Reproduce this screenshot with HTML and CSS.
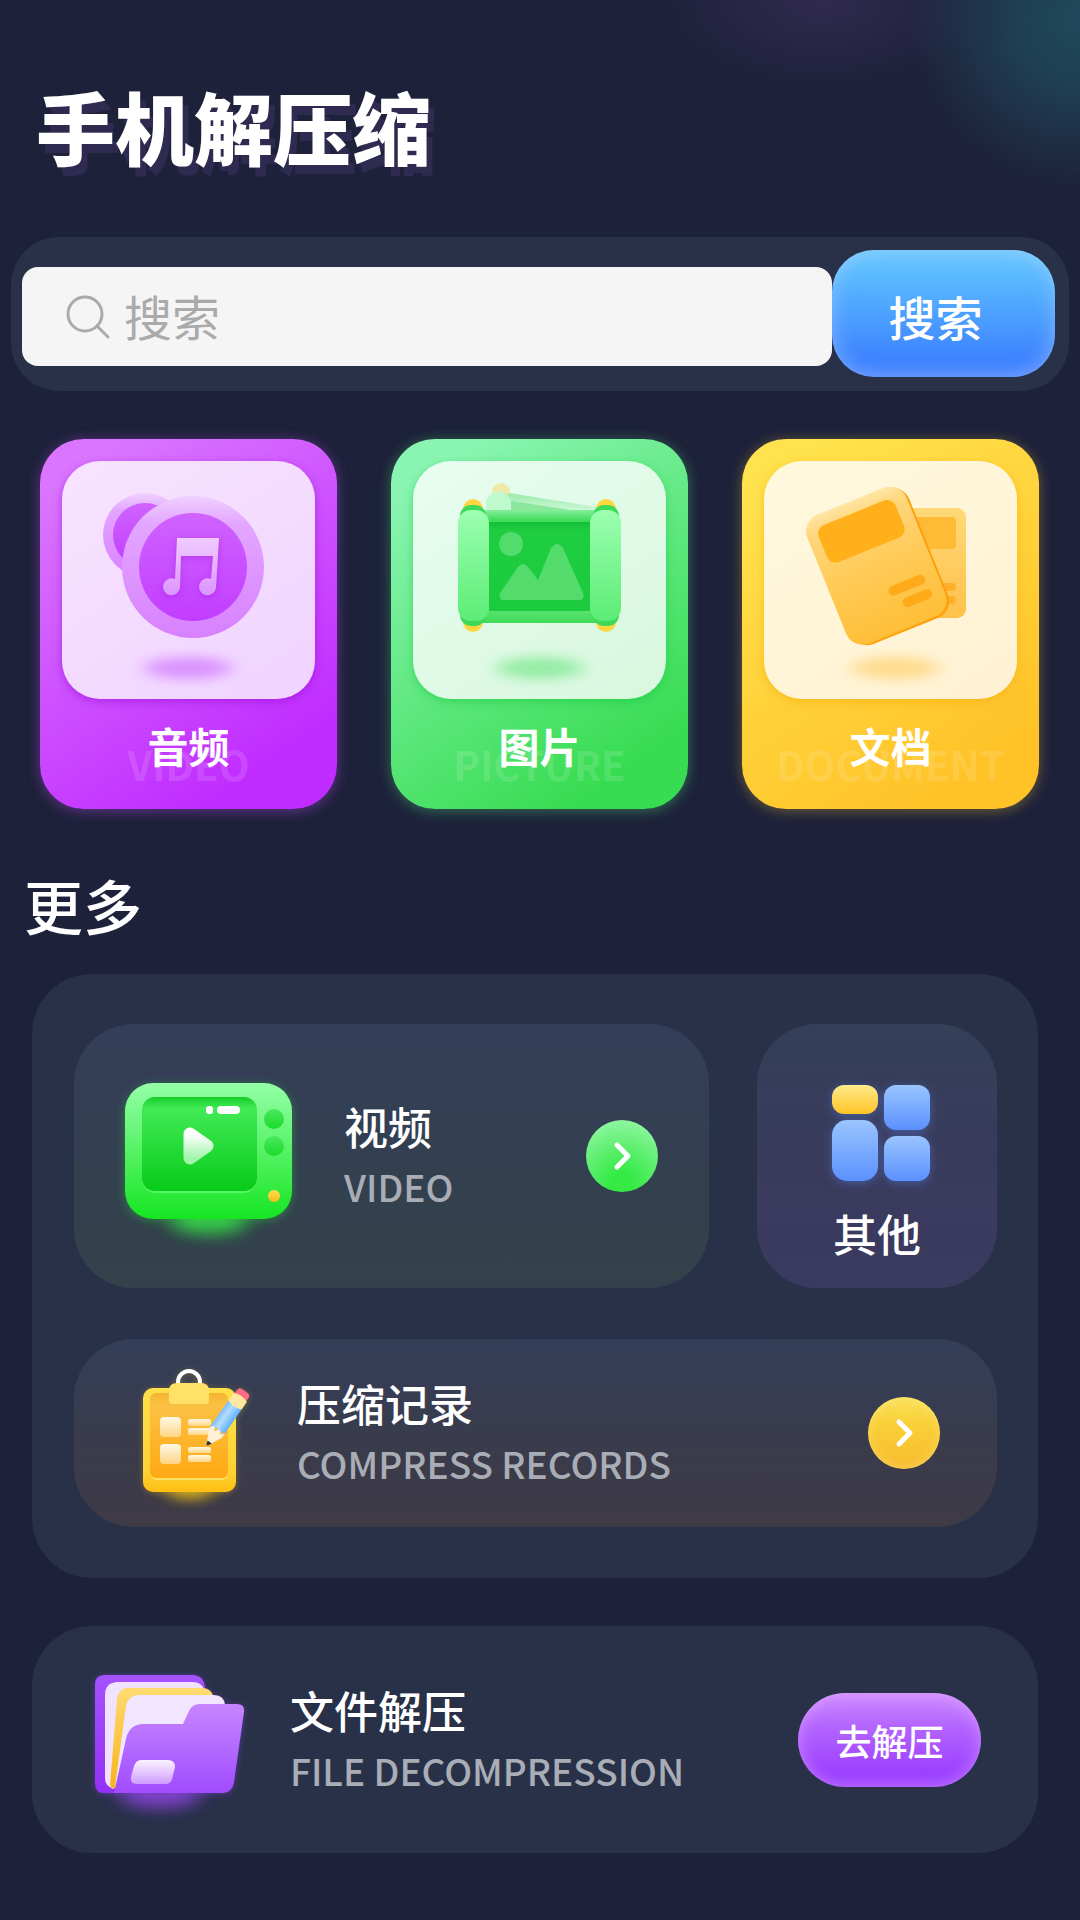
FILE: index.html
```html
<!DOCTYPE html>
<html lang="zh-CN">
<head>
  <meta charset="UTF-8" />
  <meta name="viewport" content="width=device-width, initial-scale=1.0"/>
  <title>手机解压缩</title>
  <link rel="stylesheet" href="styles.css">
</head>
<body>
  <header class="header">
    <h1>手机解压缩</h1>
  </header>

  <main>
    <form class="search" role="search">
      <label class="search-box">
        <svg class="search-icon" viewBox="0 0 44 44" fill="none" stroke="#aaa" stroke-width="3" stroke-linecap="round" aria-hidden="true">
          <circle cx="19" cy="19" r="17"/>
          <path d="M31 31L42 42"/>
        </svg>
        <input type="search" class="search-input" placeholder="搜索" aria-label="搜索">
      </label>
      <button type="submit" class="search-button">搜索</button>
    </form>

    <nav class="types">
      <a href="#audio" class="type type-audio">
        <span class="type-picture">
          <svg viewBox="0 0 253 238" aria-hidden="true">
            <defs>
              <linearGradient id="disc-ring" x1="0" y1="0" x2="0" y2="1">
                <stop offset="0" stop-color="#f0d0ff"/>
                <stop offset=".2" stop-color="#e3a6ff"/>
                <stop offset="1" stop-color="#d880ff"/>
              </linearGradient>
              <linearGradient id="disc-core" x1="0" y1="0" x2="0" y2="1">
                <stop offset="0" stop-color="#d063ff"/>
                <stop offset="1" stop-color="#c23dff"/>
              </linearGradient>
              <linearGradient id="note" x1="0" y1="0" x2="0" y2="1">
                <stop offset="0" stop-color="#f0ccff"/>
                <stop offset="1" stop-color="#dc94ff"/>
              </linearGradient>
              <filter id="soft" x="-50%" y="-200%" width="200%" height="500%">
                <feGaussianBlur stdDeviation="9 6"/>
              </filter>
            </defs>
            <ellipse cx="126" cy="207" rx="44" ry="11" fill="#d88cff" opacity=".9" filter="url(#soft)"/>
            <circle cx="83" cy="74" r="42" fill="url(#disc-ring)"/>
            <circle cx="83" cy="74" r="32" fill="url(#disc-core)"/>
            <circle cx="131" cy="106" r="71" fill="url(#disc-ring)"/>
            <circle cx="131" cy="106" r="54" fill="url(#disc-core)"/>
            <path class="note" fill="url(#note)" d="M115 77H157L154 127A8.500 8.500 0 1 1 149 118L151 95H119L118 127A8.500 8.500 0 1 1 113 118Z"/>
          </svg>
        </span>
        <span class="type-name">音频</span>
        <span class="type-ghost">VIDEO</span>
      </a>

      <a href="#picture" class="type type-image">
        <span class="type-picture">
          <svg viewBox="0 0 253 238" aria-hidden="true">
            <defs>
              <linearGradient id="roller" x1="0" y1="0" x2="0" y2="1">
                <stop offset="0" stop-color="#9cffb0"/>
                <stop offset="1" stop-color="#5cec76"/>
              </linearGradient>
              <linearGradient id="sheet" x1="0" y1="0" x2="0" y2="1">
                <stop offset="0" stop-color="#86ee9a"/>
                <stop offset=".09" stop-color="#42dc5c"/>
                <stop offset=".88" stop-color="#5ce273"/>
                <stop offset="1" stop-color="#3edb58"/>
              </linearGradient>
              <linearGradient id="canvas" x1="0" y1="0" x2="0" y2="1">
                <stop offset="0" stop-color="#14c135"/>
                <stop offset=".1" stop-color="#1fcd40"/>
                <stop offset="1" stop-color="#1ccb3d"/>
              </linearGradient>
              <linearGradient id="back-sheet" x1="0" y1="0" x2="0" y2="1">
                <stop offset="0" stop-color="#97eca9"/>
                <stop offset="1" stop-color="#cdf7d6"/>
              </linearGradient>
            </defs>
            <ellipse cx="127" cy="207" rx="44" ry="11" fill="#8eeb9f" opacity=".9" filter="url(#soft)"/>
            <circle cx="88" cy="31" r="9" fill="#eeeaa6"/>
            <path d="M76 49V38A12 11 0 0 1 98 38V49Z" fill="#88e59a"/>
            <path d="M96 32L184 46V49H90Z" fill="url(#back-sheet)"/>
            <path d="M98 40L158 49H96Z" fill="#8be79c"/>
            <path d="M73 49V43A12 12 0 0 1 98 43V49Z" fill="#c0f9cd"/>
            <rect x="50" y="38" width="20" height="133" rx="10" fill="#ffd740"/>
            <rect x="183" y="38" width="20" height="133" rx="10" fill="#ffd740"/>
            <rect x="60" y="49" width="134" height="113" fill="url(#sheet)"/>
            <rect x="47" y="44" width="26" height="121" rx="11" fill="#3fd95a"/>
            <rect x="180" y="44" width="26" height="121" rx="11" fill="#3fd95a"/>
            <rect x="76" y="61" width="101" height="89" fill="url(#canvas)"/>
            <circle cx="98" cy="83" r="12" fill="#53db6c"/>
            <path d="M87 132Q85 139 91 139H166Q172 139 170 132L150 87Q144 79 138 87L125 119L115 106Q110 100 105 106Z" fill="#53db6c"/>
            <rect x="45" y="49" width="31" height="111" rx="13" fill="url(#roller)"/>
            <rect x="177" y="49" width="31" height="111" rx="13" fill="url(#roller)"/>
          </svg>
        </span>
        <span class="type-name">图片</span>
        <span class="type-ghost">PICTURE</span>
      </a>

      <a href="#document" class="type type-doc">
        <span class="type-picture">
          <svg viewBox="0 0 253 238" aria-hidden="true">
            <defs>
              <linearGradient id="doc-back" x1="0" y1="0" x2="0" y2="1">
                <stop offset="0" stop-color="#ffd978"/>
                <stop offset="1" stop-color="#ffc14a"/>
              </linearGradient>
              <linearGradient id="doc-front" x1="0" y1="0" x2="0" y2="1">
                <stop offset="0" stop-color="#ffe5a4"/>
                <stop offset=".12" stop-color="#ffd67c"/>
                <stop offset=".5" stop-color="#ffcb58"/>
                <stop offset="1" stop-color="#ffbe38"/>
              </linearGradient>
            </defs>
            <ellipse cx="131" cy="207" rx="44" ry="11" fill="#ffd57c" opacity=".8" filter="url(#soft)"/>
            <rect x="110" y="47" width="92" height="110" rx="9" fill="url(#doc-back)"/>
            <rect x="120" y="56" width="72" height="32" rx="4" fill="#ffbb35"/>
            <rect x="160" y="122" width="32" height="8" rx="4" fill="#ffb02b"/>
            <rect x="160" y="135" width="32" height="8" rx="4" fill="#ffb02b"/>
            <g transform="translate(113 105) rotate(-22)">
              <rect x="-50" y="-68" width="105" height="139" rx="18" fill="#ff9f0a"/>
              <rect x="-54" y="-70" width="107" height="139" rx="18" fill="url(#doc-front)"/>
              <rect x="-43" y="-58" width="83" height="40" rx="9" fill="#ffb01a"/>
              <rect x="1" y="24" width="39" height="10" rx="5" fill="#ffab19"/>
              <rect x="10" y="40" width="31" height="10" rx="5" fill="#ffab19"/>
            </g>
          </svg>
        </span>
        <span class="type-name">文档</span>
        <span class="type-ghost">DOCUMENT</span>
      </a>
    </nav>

    <h2>更多</h2>

    <section class="panel more">
      <a href="#video" class="item item-video">
        <svg class="icon-tv" viewBox="0 0 167 136" aria-hidden="true">
          <defs>
            <linearGradient id="tv-body" x1="0" y1="0" x2="0" y2="1">
              <stop offset="0" stop-color="#95ffa8"/>
              <stop offset="1" stop-color="#16e522"/>
            </linearGradient>
            <linearGradient id="tv-screen" x1="0" y1="0" x2="0" y2="1">
              <stop offset="0" stop-color="#14cd27"/>
              <stop offset=".12" stop-color="#41ea56"/>
              <stop offset="1" stop-color="#08cb18"/>
            </linearGradient>
            <linearGradient id="tv-knob" x1="0" y1="0" x2="0" y2="1">
              <stop offset="0" stop-color="#4be860"/>
              <stop offset="1" stop-color="#18dc28"/>
            </linearGradient>
            <linearGradient id="tv-play" x1="0" y1="0" x2="0" y2="1">
              <stop offset="0" stop-color="#fff"/>
              <stop offset="1" stop-color="#a2f5ac"/>
            </linearGradient>
            <linearGradient id="gold" x1="0" y1="0" x2="0" y2="1">
              <stop offset="0" stop-color="#ffe050"/>
              <stop offset="1" stop-color="#f9b91a"/>
            </linearGradient>
            <filter id="glow" x="-60%" y="-200%" width="220%" height="500%">
              <feGaussianBlur stdDeviation="10 8"/>
            </filter>
          </defs>
          <ellipse cx="84" cy="136" rx="38" ry="13" fill="#38d84c" opacity=".9" filter="url(#glow)"/>
          <rect width="167" height="136" rx="28" fill="url(#tv-body)"/>
          <rect x="17" y="14" width="115" height="96" rx="14" fill="#7bff8c" opacity=".5"/>
          <rect x="17" y="14" width="115" height="94" rx="13" fill="url(#tv-screen)"/>
          <rect x="81" y="23" width="7" height="8" rx="3" fill="#fff"/>
          <rect x="92" y="23" width="23" height="8" rx="4" fill="#fff"/>
          <path d="M65 51V75L82 63Z" fill="url(#tv-play)" stroke="url(#tv-play)" stroke-width="13" stroke-linejoin="round"/>
          <circle cx="149" cy="36" r="10" fill="url(#tv-knob)"/>
          <circle cx="149" cy="63" r="10" fill="url(#tv-knob)"/>
          <circle cx="149" cy="113" r="6" fill="url(#gold)"/>
        </svg>
        <span class="item-text">
          <strong>视频</strong>
          <small>VIDEO</small>
        </span>
        <span class="arrow arrow-green">
          <svg viewBox="0 0 20 28" aria-hidden="true"><path d="M5 3L16 14L5 25"/></svg>
        </span>
      </a>

      <a href="#other" class="item item-other">
        <svg class="icon-grid" viewBox="0 0 98 96" aria-hidden="true">
          <defs>
            <linearGradient id="tile-blue" x1="0" y1="0" x2="0" y2="1">
              <stop offset="0" stop-color="#9ac5ff"/>
              <stop offset="1" stop-color="#5b91ff"/>
            </linearGradient>
            <linearGradient id="tile-gold" x1="0" y1="0" x2="0" y2="1">
              <stop offset="0" stop-color="#ffea8c"/>
              <stop offset="1" stop-color="#ffc425"/>
            </linearGradient>
          </defs>
          <rect width="46" height="29" rx="12" fill="url(#tile-gold)"/>
          <rect x="52" width="46" height="45" rx="12" fill="url(#tile-blue)"/>
          <rect y="35" width="46" height="61" rx="15" fill="url(#tile-blue)"/>
          <rect x="52" y="51" width="46" height="45" rx="12" fill="url(#tile-blue)"/>
        </svg>
        <strong>其他</strong>
      </a>

      <a href="#records" class="item item-records">
        <svg class="icon-board" viewBox="0 0 106 124" aria-hidden="true">
          <defs>
            <linearGradient id="board" x1="0" y1="0" x2="0" y2="1">
              <stop offset="0" stop-color="#ffe04a"/>
              <stop offset=".8" stop-color="#ffd234"/>
              <stop offset="1" stop-color="#ffbe12"/>
            </linearGradient>
            <linearGradient id="board-face" x1="0" y1="0" x2="0" y2="1">
              <stop offset="0" stop-color="#f5b531"/>
              <stop offset=".15" stop-color="#fbc043"/>
              <stop offset="1" stop-color="#ffa913"/>
            </linearGradient>
            <linearGradient id="board-mark" x1="0" y1="0" x2="0" y2="1">
              <stop offset="0" stop-color="#fff8e6"/>
              <stop offset="1" stop-color="#ffd584"/>
            </linearGradient>
            <linearGradient id="pencil">
              <stop offset="0" stop-color="#7cc0ff"/>
              <stop offset=".4" stop-color="#b3dcff"/>
              <stop offset="1" stop-color="#5cb0ff"/>
            </linearGradient>
          </defs>
          <ellipse cx="47" cy="120" rx="24" ry="10" fill="#e0b918" opacity=".8" filter="url(#soft)"/>
          <circle cx="46" cy="13" r="11" fill="none" stroke="#fff" stroke-width="4"/>
          <rect y="19" width="93" height="104" rx="10" fill="url(#board)"/>
          <rect x="7" y="24" width="78" height="87" rx="7" fill="#ffe066"/>
          <rect x="7" y="24" width="78" height="85" rx="6" fill="url(#board-face)"/>
          <path d="M26 22Q26 14 34 14H58Q66 14 66 22V32Q66 35 63 35H29Q26 35 26 32Z" fill="#ffe168"/>
          <g fill="url(#board-mark)">
            <rect x="17" y="48" width="21" height="20" rx="4"/>
            <rect x="17" y="75" width="21" height="20" rx="4"/>
            <rect x="45" y="50" width="23" height="7" rx="2"/>
            <rect x="45" y="59" width="23" height="7" rx="2"/>
            <rect x="45" y="78" width="23" height="6" rx="2"/>
            <rect x="45" y="86" width="23" height="7" rx="2"/>
          </g>
          <g transform="translate(64 76) rotate(35)">
            <path d="M-7 -54V-62Q-7 -66 -3 -66H3Q7 -66 7 -62V-54Z" fill="#ff6b86"/>
            <path d="M-8 -16V-51H8V-16L5 -20L2 -16L-2 -20L-5 -16Z" fill="url(#pencil)"/>
            <path d="M-8 -58Q0 -62 8 -58V-49Q0 -45 -8 -49Z" fill="#ffe9a0"/>
            <path d="M-8 -16L-5 -20L-2 -16L2 -20L5 -16L8 -20V-14L1 0H-1Z" fill="#fff0d8"/>
            <path d="M-2 -4H3L1 0H-1Z" fill="#333"/>
          </g>
        </svg>
        <span class="item-text">
          <strong>压缩记录</strong>
          <small>COMPRESS RECORDS</small>
        </span>
        <span class="arrow arrow-gold">
          <svg viewBox="0 0 20 28" aria-hidden="true"><path d="M5 3L16 14L5 25"/></svg>
        </span>
      </a>
    </section>

    <section class="panel unzip">
      <svg class="icon-folder" viewBox="0 0 149 118" aria-hidden="true">
        <defs>
          <linearGradient id="folder-back" x1="0" y1="0" x2="0" y2="1">
            <stop offset="0" stop-color="#a552ff"/>
            <stop offset="1" stop-color="#9330f5"/>
          </linearGradient>
          <linearGradient id="folder-front" x1="0" y1="0" x2="0" y2="1">
            <stop offset="0" stop-color="#c685ff"/>
            <stop offset="1" stop-color="#a04cff"/>
          </linearGradient>
          <linearGradient id="paper-gold" x1="0" y1="0" x2="0" y2="1">
            <stop offset="0" stop-color="#ffdb70"/>
            <stop offset="1" stop-color="#f8b31c"/>
          </linearGradient>
          <linearGradient id="folder-label" x1="0" y1="0" x2="0" y2="1">
            <stop offset="0" stop-color="#fbf4ff"/>
            <stop offset="1" stop-color="#cf9cff"/>
          </linearGradient>
        </defs>
        <ellipse cx="65" cy="118" rx="40" ry="13" fill="#8a45d8" opacity=".85" filter="url(#glow)"/>
        <path d="M9 0H98Q110 1 110 14V118H9Q0 118 0 108V10Q0 0 9 0Z" fill="url(#folder-back)"/>
        <path d="M22 7H98Q106 7 109 14V60L18 114Q10 110 10 104V20Q10 8 22 7Z" fill="#f1e2ff"/>
        <path d="M32 13H107Q116 13 118 21V60L17 114L15 110L22 24Q23 14 32 13Z" fill="url(#paper-gold)"/>
        <path d="M43 20H119Q129 20 130 30V60L20 112L31 31Q33 21 43 20Z" fill="#f1e5ff"/>
        <path d="M19 118L31 64Q34 50 47 49H88L94 36Q97 29 105 29H142Q150 29 149 37L139 107Q137 118 128 118Z" fill="url(#folder-front)"/>
        <path d="M46 85H73Q80 85 80 92L77 104Q76 109 70 109H42Q35 109 36 102L39 91Q41 85 46 85Z" fill="url(#folder-label)"/>
      </svg>
      <span class="item-text">
        <strong>文件解压</strong>
        <small>FILE DECOMPRESSION</small>
      </span>
      <button type="button" class="unzip-button">去解压</button>
    </section>
  </main>
</body>
</html>
```
FILE: styles.css
```css
* {
  box-sizing: border-box;
  margin: 0;
  padding: 0;
}

body {
  font-family: "Noto Sans CJK SC", sans-serif;
  background-color: #1d213a;
  background-image:
    radial-gradient(circle at 100% 20px, #20485a 0, rgba(32, 72, 90, 0.8) 60px, rgba(32, 72, 90, 0) 170px),
    radial-gradient(ellipse 170px 95px at 76% 0, #302a4e 0, rgba(48, 42, 78, 0) 100%);
  background-repeat: no-repeat;
  color: #fff;
  min-height: 100vh;
  padding-bottom: 64px;
}

a {
  color: inherit;
  text-decoration: none;
}

svg {
  display: block;
  overflow: visible;
}

.header {
  padding: 86px 36px 71px;
}

h1 {
  font-size: 79px;
  font-weight: 900;
  line-height: 80px;
  text-shadow: 6px 9px 0 #2f2a50;
}

/* buscador */
.search {
  display: flex;
  align-items: flex-end;
  margin: 0 11px;
  padding: 13px 14px 14px 11px;
  border-radius: 48px;
  background: #293149;
}

.search-box {
  flex: 1;
  display: flex;
  align-items: center;
  gap: 14px;
  height: 99px;
  margin-bottom: 11px;
  padding: 0 44px;
  border-radius: 16px;
  background: #f5f5f5;
}

.search-icon {
  width: 44px;
  height: 44px;
  flex: none;
}

.search-input {
  flex: 1;
  min-width: 0;
  padding-bottom: 4px;
  border: none;
  outline: none;
  background: none;
  appearance: none;
  font-family: inherit;
  font-size: 48px;
  line-height: 72px;
  font-weight: 400;
  color: #333;
}

.search-input::placeholder {
  color: #aaa;
  opacity: 1;
}

.search-button {
  width: 223px;
  height: 127px;
  padding: 4px 16px 0 0;
  border: none;
  border-radius: 42px;
  background: linear-gradient(#6cc8ff, #5abaff 20%, #3d82ff 88%, #4380ff);
  box-shadow: inset 0 0 20px rgba(190, 215, 255, 0.5);
  color: #fff;
  font-family: inherit;
  font-size: 47px;
  font-weight: 500;
  line-height: 60px;
  cursor: pointer;
}

.types {
  display: grid;
  grid-template-columns: repeat(3, 1fr);
  gap: 54px;
  margin: 48px 41px 0 40px;
}

.type {
  display: flex;
  flex-direction: column;
  align-items: center;
  position: relative;
  height: 370px;
  padding: 22px;
  border-radius: 44px;
}

.type-audio {
  background: linear-gradient(145deg, #da75ff 10%, #c02bff 85%);
  box-shadow: 0 2px 14px rgba(200, 80, 255, 0.4);
}

.type-image {
  background: linear-gradient(145deg, #8af5b2 10%, #38dc52 85%);
  box-shadow: 0 2px 14px rgba(80, 230, 120, 0.4);
}

.type-doc {
  background: linear-gradient(145deg, #ffe24d 10%, #ffc328 85%);
  box-shadow: 0 2px 14px rgba(255, 205, 50, 0.35);
}

.type-picture {
  width: 100%;
  height: 238px;
  border-radius: 38px;
}

.type-picture svg {
  width: 100%;
  height: 100%;
}

.type-audio .type-picture {
  background: linear-gradient(145deg, #f7e4ff, #f0d3ff);
  box-shadow: 0 3px 8px rgba(150, 10, 210, 0.5);
}

.type-image .type-picture {
  background: linear-gradient(145deg, #e8fdf1, #d8f7de);
  box-shadow: 0 3px 8px rgba(20, 200, 60, 0.5);
}

.type-doc .type-picture {
  background: linear-gradient(145deg, #fff9de, #fff1d3);
  box-shadow: 0 3px 8px rgba(240, 170, 10, 0.5);
}

.note {
  filter: drop-shadow(0 2px 3px rgba(150, 20, 210, 0.4));
}

.type-name {
  position: relative;
  z-index: 1;
  margin-top: 22px;
  font-size: 41px;
  font-weight: 700;
  line-height: 48px;
}

/* texto tenue detrás del nombre */
.type-ghost {
  position: absolute;
  bottom: 21px;
  left: 0;
  right: 0;
  text-align: center;
  font-size: 40px;
  font-weight: 700;
  line-height: 48px;
  color: rgba(255, 255, 255, 0.15);
}

h2 {
  margin: 66px 24px 39px;
  font-size: 59px;
  font-weight: 500;
  line-height: 60px;
}

.panel {
  margin: 0 42px 0 32px;
  border-radius: 60px;
  background: #293149;
}

.more {
  display: grid;
  grid-template-columns: 635fr 240fr;
  gap: 51px 48px;
  padding: 50px 41px 51px 42px;
}

.item {
  display: flex;
  align-items: center;
  border-radius: 60px;
}

.item-text {
  flex: 1;
  display: flex;
  flex-direction: column;
}

strong {
  font-size: 44px;
  font-weight: 500;
  line-height: 60px;
}

small {
  font-size: 37px;
  font-weight: 500;
  line-height: 60px;
  color: #a9adb6;
}

.item-video {
  gap: 52px;
  height: 264px;
  padding: 0 51px;
  background: linear-gradient(#343e59, #33404f 60%, #33424a);
}

.item-other {
  flex-direction: column;
  gap: 22px;
  height: 264px;
  padding-top: 61px;
  background: linear-gradient(#343f58, #393b5c 50%, #3b3a60);
}

.item-records {
  grid-column: 1 / -1;
  gap: 48px;
  height: 188px;
  padding: 0 57px 0 69px;
  background: linear-gradient(#343e58, #3a3b4b 60%, #3f3a46);
}

.icon-tv {
  width: 167px;
  height: 136px;
  margin-bottom: 10px;
  filter: drop-shadow(0 2px 5px rgba(40, 220, 60, 0.4));
}

.icon-grid {
  width: 98px;
  height: 96px;
  margin-left: 8px;
  filter: drop-shadow(0 2px 5px rgba(90, 140, 255, 0.4));
}

.icon-board {
  width: 106px;
  height: 124px;
  margin-bottom: 4px;
  filter: drop-shadow(0 1px 3px rgba(255, 200, 40, 0.3));
}

.icon-folder {
  width: 149px;
  height: 118px;
  margin-bottom: 12px;
  filter: drop-shadow(0 1px 3px rgba(150, 70, 255, 0.4));
}

.arrow {
  display: flex;
  align-items: center;
  justify-content: center;
  width: 72px;
  height: 72px;
  border-radius: 50%;
}

.arrow svg {
  width: 20px;
  height: 28px;
  fill: none;
  stroke: #fff;
  stroke-width: 5;
  stroke-linecap: round;
  stroke-linejoin: round;
}

.arrow-green {
  background: radial-gradient(circle at 50% 88%, #35ea45 15%, #5eef70 50%, #a0f8b0);
}

.arrow-gold {
  background: linear-gradient(#fbe15a, #f9cf36 40%, #f7bc2e);
  box-shadow: inset 0 0 12px rgba(255, 235, 150, 0.5);
}

.unzip {
  display: flex;
  align-items: center;
  gap: 46px;
  height: 227px;
  margin-top: 48px;
  padding: 0 57px 0 63px;
}

.unzip-button {
  width: 183px;
  height: 94px;
  border: none;
  border-radius: 47px;
  background: linear-gradient(#ce8aff, #b565ff 35%, #9c40ff 85%);
  box-shadow: inset 0 0 16px rgba(235, 190, 255, 0.5);
  color: #fff;
  font-family: inherit;
  font-size: 36px;
  font-weight: 500;
  cursor: pointer;
}
```
